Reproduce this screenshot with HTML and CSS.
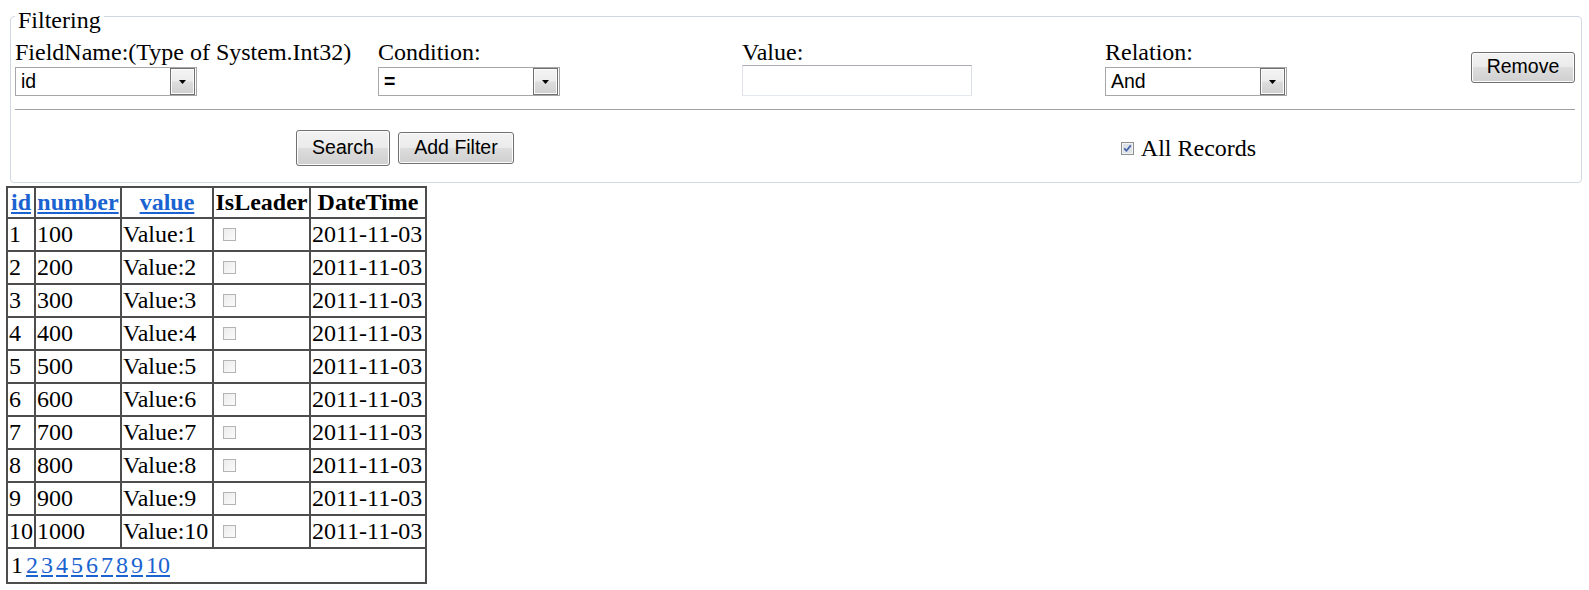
FILE: index.html
```html
<!DOCTYPE html>
<html>
<head>
<meta charset="utf-8">
<title>Filtering</title>
<link rel="stylesheet" href="styles.css">
</head>
<body>
<fieldset class="filter">
  <legend class="filter-legend">Filtering</legend>
  <div class="filter-row">
    <div class="field">
      <div class="field-label">FieldName:(Type of System.Int32)</div>
      <div class="dropdown"><span class="dropdown-text">id</span><span class="dropdown-btn"><svg width="7" height="4" viewBox="0 0 7 4"><polygon points="0,0 7,0 3.5,4" fill="#000"/></svg></span></div>
    </div>
    <div class="field">
      <div class="field-label">Condition:</div>
      <div class="dropdown"><span class="dropdown-text dropdown-eq">=</span><span class="dropdown-btn"><svg width="7" height="4" viewBox="0 0 7 4"><polygon points="0,0 7,0 3.5,4" fill="#000"/></svg></span></div>
    </div>
    <div class="field">
      <div class="field-label">Value:</div>
      <input class="text-input" type="text" value="">
    </div>
    <div class="field">
      <div class="field-label">Relation:</div>
      <div class="dropdown"><span class="dropdown-text">And</span><span class="dropdown-btn"><svg width="7" height="4" viewBox="0 0 7 4"><polygon points="0,0 7,0 3.5,4" fill="#000"/></svg></span></div>
    </div>
    <button class="btn btn-remove" type="button">Remove</button>
  </div>
  <hr class="divider">
  <div class="action-row">
    <div class="action-cell">
      <button class="btn btn-search" type="button">Search</button>
      <button class="btn btn-add" type="button">Add Filter</button>
    </div>
    <div class="action-cell">
      <label class="check-label"><svg class="check-box" width="13" height="13" viewBox="0 0 13 13"><rect x="0.5" y="0.5" width="12" height="12" fill="#f3f3f3" stroke="#8e8f8f"/><rect x="2" y="2" width="9" height="9" fill="#dde1e8"/><path d="M3.2 6.4 L5.4 8.8 L9.8 3.4" stroke="#4460a8" stroke-width="1.7" fill="none"/></svg><span>All Records</span></label>
    </div>
  </div>
</fieldset>

<table class="grid">
  <thead>
    <tr class="grid-head">
      <th class="c-id"><a href="#">id</a></th>
      <th class="c-num"><a href="#">number</a></th>
      <th class="c-val"><a href="#">value</a></th>
      <th class="c-lead">IsLeader</th>
      <th class="c-date">DateTime</th>
    </tr>
  </thead>
  <tbody>
    <tr><td>1</td><td>100</td><td>Value:1</td><td><span class="cb"></span></td><td>2011-11-03</td></tr>
    <tr><td>2</td><td>200</td><td>Value:2</td><td><span class="cb"></span></td><td>2011-11-03</td></tr>
    <tr><td>3</td><td>300</td><td>Value:3</td><td><span class="cb"></span></td><td>2011-11-03</td></tr>
    <tr><td>4</td><td>400</td><td>Value:4</td><td><span class="cb"></span></td><td>2011-11-03</td></tr>
    <tr><td>5</td><td>500</td><td>Value:5</td><td><span class="cb"></span></td><td>2011-11-03</td></tr>
    <tr><td>6</td><td>600</td><td>Value:6</td><td><span class="cb"></span></td><td>2011-11-03</td></tr>
    <tr><td>7</td><td>700</td><td>Value:7</td><td><span class="cb"></span></td><td>2011-11-03</td></tr>
    <tr><td>8</td><td>800</td><td>Value:8</td><td><span class="cb"></span></td><td>2011-11-03</td></tr>
    <tr><td>9</td><td>900</td><td>Value:9</td><td><span class="cb"></span></td><td>2011-11-03</td></tr>
    <tr><td>10</td><td>1000</td><td>Value:10</td><td><span class="cb"></span></td><td>2011-11-03</td></tr>
    <tr class="pager-row">
      <td colspan="5">
        <div class="pager">
          <span>1</span><a href="#">2</a><a href="#">3</a><a href="#">4</a><a href="#">5</a><a href="#">6</a><a href="#">7</a><a href="#">8</a><a href="#">9</a><a href="#">10</a>
        </div>
      </td>
    </tr>
  </tbody>
</table>
</body>
</html>
```

FILE: styles.css
```css
* { box-sizing: border-box; }

html, body {
  margin: 0;
  padding: 0;
  background: #fff;
}

body {
  font-family: "Liberation Serif", "Times New Roman", serif;
  font-size: 24px;
  color: #000;
}

/* ---------- filter fieldset ---------- */
.filter {
  margin: 0 0 0 10px;
  width: 1572px;
  min-width: 0;
  border: 1px solid #cfd8e2;
  border-radius: 4px;
  padding: 0 6px 16px 4px;
}

.filter-legend {
  padding: 8px 3px 0 3px;
  line-height: 24px;
}

.filter-row {
  display: grid;
  grid-template-columns: 363px 364px 363px 1fr auto;
  align-items: end;
  margin-top: 6px;
}

.field-label {
  line-height: 28px;
  height: 28px;
  white-space: nowrap;
}

.dropdown {
  margin-top: 1px;
  width: 182px;
  height: 29px;
  border: 1px solid #a7a7a7;
  background: #fff;
  display: flex;
  font-family: "Liberation Sans", Arial, sans-serif;
  font-size: 19.5px;
}

.dropdown-text {
  flex: 1;
  padding-left: 5px;
  display: flex;
  align-items: center;
}

.dropdown-eq { font-weight: bold; }

.dropdown-btn {
  width: 25px;
  margin-right: 1px;
  border: 1px solid #707070;
  background: linear-gradient(#f4f4f4 0%, #ececec 48%, #dddddd 52%, #d0d0d0 100%);
  display: flex;
  align-items: center;
  justify-content: center;
  box-shadow: inset 0 0 0 1px #fbfbfb;
}

.dropdown-btn svg { display: block; }

.text-input {
  display: block;
  margin: -1px 0 0;
  width: 230px;
  height: 31px;
  border: 1px solid;
  border-color: #abadb3 #dbdfe6 #e3e9ef #e2e3ea;
  padding: 0 4px;
  background: #fff;
  font-family: "Liberation Sans", Arial, sans-serif;
  font-size: 19.5px;
  outline: none;
}

.btn {
  font-family: "Liberation Sans", Arial, sans-serif;
  font-size: 19.5px;
  color: #000;
  border: 1px solid #707070;
  border-radius: 3px;
  background: linear-gradient(#f2f2f2 0%, #ebebeb 50%, #dddddd 50%, #cfcfcf 100%);
  box-shadow: inset 0 0 0 1px #fcfcfc;
  padding: 0 14px;
  margin: 0;
  display: inline-flex;
  align-items: center;
  justify-content: center;
  line-height: 1;
}

.btn-remove {
  align-self: center;
  width: 104px;
  height: 31px;
  padding-bottom: 1px;
}

.divider {
  margin: 13px 0 0;
  border: 0;
  border-top: 1px solid #a0a0a0;
  height: 0;
}

.action-row {
  display: grid;
  grid-template-columns: 1fr 1fr;
  align-items: center;
  padding-top: 20px;
  height: 56px;
}

.action-cell {
  display: flex;
  justify-content: center;
  align-items: center;
  gap: 8px;
}

.btn-search {
  width: 94px;
  height: 36px;
}

.btn-add {
  width: 116px;
  height: 32px;
}

.check-label {
  display: flex;
  align-items: center;
  line-height: 28px;
}

.check-box {
  display: block;
  margin: 0 7px;
}

/* ---------- grid table ---------- */
.grid {
  margin: 3px 0 0 6px;
  border-collapse: separate;
  border-spacing: 0;
  border-top: 2px solid #4d4d4d;
  border-left: 2px solid #4d4d4d;
}

.grid th,
.grid td {
  border-right: 2px solid #4d4d4d;
  border-bottom: 2px solid #4d4d4d;
  padding: 0 1px;
  white-space: nowrap;
  vertical-align: middle;
}

.grid th {
  height: 31px;
  font-weight: bold;
  text-align: center;
}

.grid td {
  height: 33px;
  text-align: left;
}

.grid a {
  color: #1a63d0;
  text-decoration: underline;
}

.c-id { width: 28px; }
.c-num { width: 86px; }
.c-val { width: 92px; }
.c-lead { width: 97px; }
.c-date { width: 116px; }

.cb {
  display: block;
  width: 13px;
  height: 13px;
  margin-left: 8px;
  border: 1px solid #b4b4b4;
  background: linear-gradient(135deg, #ececec, #fbfbfb);
}

.grid .pager-row td {
  height: 35px;
}

.pager {
  display: flex;
  gap: 3px;
  padding-left: 2px;
}
```
